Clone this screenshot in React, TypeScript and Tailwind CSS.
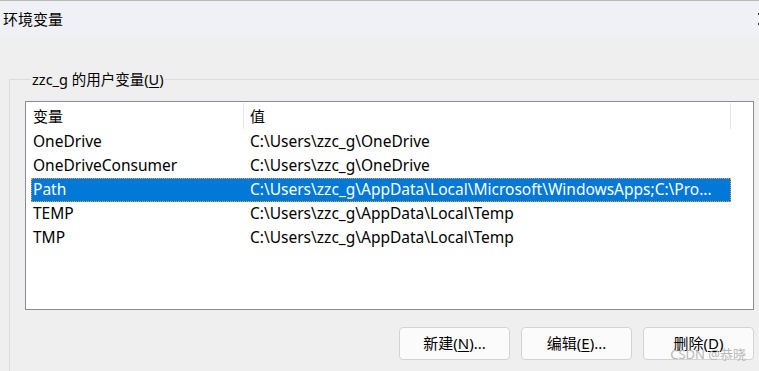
const rows = [
  { name: "OneDrive", value: "C:\\Users\\zzc_g\\OneDrive" },
  { name: "OneDriveConsumer", value: "C:\\Users\\zzc_g\\OneDrive" },
  { name: "Path", value: "C:\\Users\\zzc_g\\AppData\\Local\\Microsoft\\WindowsApps;C:\\Pro...", selected: true },
  { name: "TEMP", value: "C:\\Users\\zzc_g\\AppData\\Local\\Temp" },
  { name: "TMP", value: "C:\\Users\\zzc_g\\AppData\\Local\\Temp" },
]

function Button({ label, hotkey, rest }: { label: string; hotkey: string; rest: string }) {
  return (
    <button className="w-[111px] h-[33px] rounded-[4px] border border-[#d3d3d3] bg-[#fbfbfb] text-[15px] text-black flex items-center justify-center">
      {label}(<span className="underline underline-offset-2">{hotkey}</span>){rest}
    </button>
  )
}

export default function App() {
  return (
    <div
      className="w-[759px] h-[371px] overflow-hidden bg-[#efefef] text-black"
      style={{ fontFamily: '"Noto Sans", "Noto Sans CJK SC", sans-serif' }}
    >
      {/* title bar */}
      <div className="h-[37px] border-t border-[#b9b9b9] bg-[#f0f1f6] flex items-center justify-between pl-[3px] text-[15px]">
        <span>环境变量</span>
        <span className="w-px h-[12px] border-y-2 border-[#333]" />
      </div>

      <fieldset className="ml-[9px] mt-[32px] border-t border-l border-[#dcdcdc] pl-[15px] pb-4">
        <legend className="ml-[6px] px-[1px] text-[14.5px] leading-[20px]">
          zzc_g 的用户变量(<span className="underline underline-offset-2">U</span>)
        </legend>

        <div className="mt-[12px] w-[729px] h-[209px] border border-[#8b8b95] bg-white text-[15.5px]">
          <div className="h-[28px] ml-[5px] flex items-center">
            <div className="w-[212px] pl-[2px] text-[15px]">变量</div>
            <div className="w-px h-[26px] bg-[#e5e5e5]" />
            <div className="w-[486px] pl-[6px] text-[15px]">值</div>
            <div className="w-px h-[26px] bg-[#e5e5e5]" />
          </div>
          <div className="ml-[5px] w-[700px]">
            {rows.map((r) => (
              <div
                key={r.name}
                className={
                  "h-[24px] flex items-center whitespace-nowrap " +
                  (r.selected
                    ? "bg-[#0078d7] text-white outline outline-1 outline-dotted outline-[#f0a040] -outline-offset-1"
                    : "")
                }
              >
                <div className="w-[219px] pl-[2px]">{r.name}</div>
                <div className="flex-1 overflow-hidden">{r.value}</div>
              </div>
            ))}
          </div>
        </div>

        <div className="w-[729px] mt-[17px] flex justify-end gap-[11px] relative">
          <Button label="新建" hotkey="N" rest="..." />
          <Button label="编辑" hotkey="E" rest="..." />
          <Button label="删除" hotkey="D" rest="" />
          <span className="absolute right-[8px] top-[21px] text-[13px] leading-none text-[#b8b8b8]">
            CSDN @恭晓
          </span>
        </div>
      </fieldset>
    </div>
  )
}
